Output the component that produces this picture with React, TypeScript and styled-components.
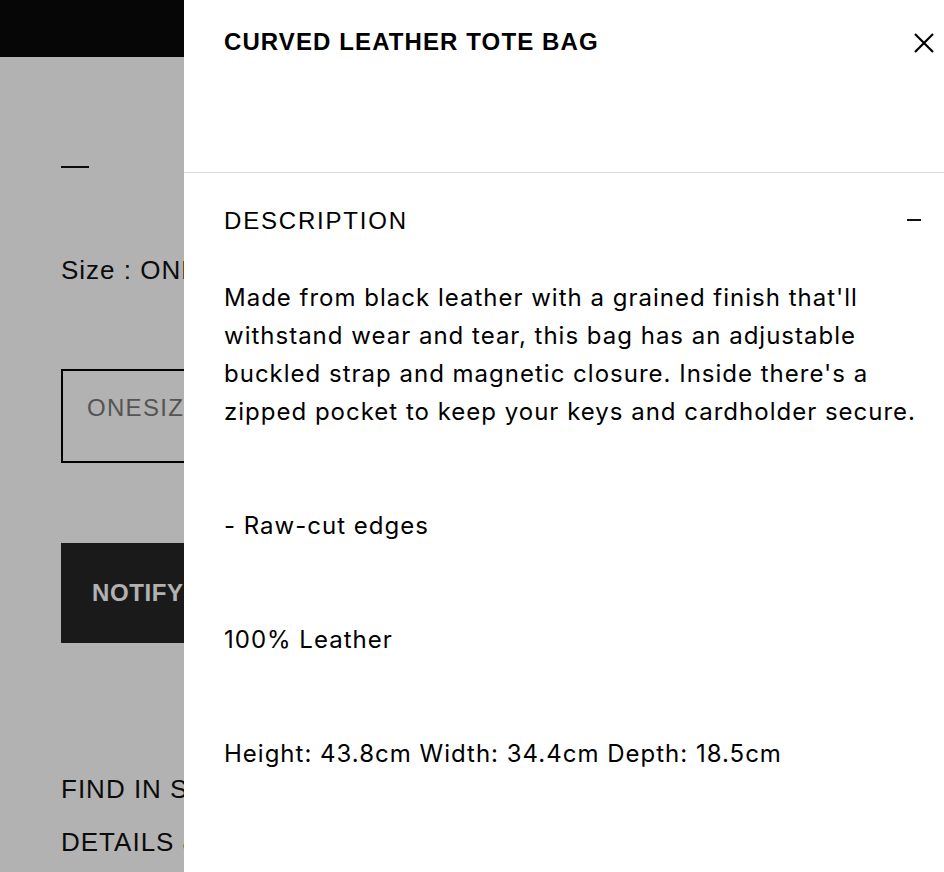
import React from 'react';
import styled, { createGlobalStyle } from 'styled-components';

const GlobalStyle = createGlobalStyle`
  html, body {
    margin: 0;
    padding: 0;
    background: #ffffff;
    font-family: "Liberation Sans", Arial, sans-serif;
    color: #111111;
  }
  * { box-sizing: border-box; }
`;

const grotesk = `"Inter", "Liberation Sans", Arial, sans-serif`;

// Page behind the drawer
const Page = styled.div`
  position: relative;
  width: 944px;
  height: 872px;
  overflow: hidden;
  background: #ffffff;
`;

const TopBar = styled.div`
  height: 57px;
  background: #0a0a0a;
`;

const ProductColumn = styled.div`
  display: flex;
  flex-direction: column;
  align-items: flex-start;
  padding: 109px 0 0 61px;
  font-size: 26px;
`;

const Dash = styled.div`
  width: 28px;
  height: 2px;
  background: #111111;
`;

const SizeLabel = styled.div`
  margin-top: 88px;
  line-height: 28px;
  letter-spacing: 1px;
  color: #111111;
  white-space: nowrap;
`;

const SizeBox = styled.div`
  margin-top: 85px;
  width: 402px;
  height: 94px;
  border: 2px solid #000000;
  padding: 22px 0 0 24px;
  color: #797979;
  font-size: 24px;
  line-height: 30px;
  letter-spacing: 1.3px;
`;

const NotifyButton = styled.div`
  margin-top: 80px;
  width: 402px;
  height: 100px;
  background: #262626;
  color: #ffffff;
  font-weight: 700;
  font-size: 24px;
  letter-spacing: 0.6px;
  display: flex;
  align-items: center;
  padding-left: 31px;
`;

const LinkRow = styled.div<{ $first?: boolean }>`
  margin-top: ${(p) => (p.$first ? '132px' : '25px')};
  line-height: 28px;
  letter-spacing: 1px;
  color: #111111;
  white-space: nowrap;
`;

const Overlay = styled.div`
  position: absolute;
  inset: 0;
  background: rgba(0, 0, 0, 0.3);
`;

// Drawer
const Drawer = styled.aside`
  position: absolute;
  top: 0;
  right: 0;
  bottom: 0;
  width: 760px;
  background: #ffffff;
  display: flex;
  flex-direction: column;
`;

const DrawerHeader = styled.div`
  height: 173px;
  border-bottom: 1px solid #dcdcdc;
  display: flex;
  justify-content: space-between;
  align-items: flex-start;
  padding: 23px 9px 0 40px;
`;

const Title = styled.h2`
  margin: 0;
  font-size: 24px;
  line-height: 38px;
  font-weight: 700;
  color: #000000;
  letter-spacing: 1.1px;
`;

const CloseButton = styled.button`
  border: none;
  background: none;
  padding: 0;
  margin-top: 9px;
  width: 22px;
  height: 22px;
  display: flex;
  cursor: pointer;
`;

const Section = styled.section`
  padding: 29px 23px 0 40px;
`;

const SectionHead = styled.div`
  display: flex;
  justify-content: space-between;
  align-items: center;
  height: 38px;
`;

const SectionTitle = styled.h3`
  margin: 0;
  font-size: 24px;
  font-weight: 400;
  line-height: 38px;
  letter-spacing: 1.8px;
  color: #000000;
`;

const Minus = styled.span`
  width: 14px;
  height: 2px;
  background: #111111;
  margin-top: -3px;
`;

const Body = styled.div`
  margin-top: 39px;
  font-family: ${grotesk};
  font-size: 24px;
  line-height: 38px;
  letter-spacing: 1px;
  color: #000000;
`;

const Para = styled.p`
  margin: 0 0 76px;
`;

const CloseIcon = () => (
  <svg width="22" height="22" viewBox="0 0 22 22" fill="none">
    <path d="M2 2L20 20M20 2L2 20" stroke="#000" strokeWidth="2.2" />
  </svg>
);

const App: React.FC = () => {
  return (
    <>
      <GlobalStyle />
      <Page>
        <TopBar />
        <ProductColumn>
          <Dash />
          <SizeLabel>Size : ONESIZE</SizeLabel>
          <SizeBox>ONESIZE</SizeBox>
          <NotifyButton>NOTIFY ME</NotifyButton>
          <LinkRow $first>FIND IN STORE</LinkRow>
          <LinkRow>DETAILS &amp; CARE</LinkRow>
        </ProductColumn>
        <Overlay />
        <Drawer>
          <DrawerHeader>
            <Title>CURVED LEATHER TOTE BAG</Title>
            <CloseButton aria-label="Close">
              <CloseIcon />
            </CloseButton>
          </DrawerHeader>
          <Section>
            <SectionHead>
              <SectionTitle>DESCRIPTION</SectionTitle>
              <Minus />
            </SectionHead>
            <Body>
              <Para>
                Made from black leather with a grained finish that'll withstand wear and tear,
                this bag has an adjustable buckled strap and magnetic closure. Inside there's a
                zipped pocket to keep your keys and cardholder secure.
              </Para>
              <Para>- Raw-cut edges</Para>
              <Para>100% Leather</Para>
              <Para>Height: 43.8cm Width: 34.4cm Depth: 18.5cm</Para>
            </Body>
          </Section>
        </Drawer>
      </Page>
    </>
  );
};

export default App;
